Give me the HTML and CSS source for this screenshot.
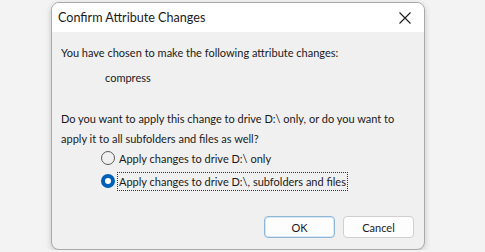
FILE: index.html
```html
<!DOCTYPE html>
<html>
<head>
<link rel="stylesheet" href="styles.css">
</head>
<body>
  <div class="dialog">
    <div class="title-bar">
      <span class="title">Confirm Attribute Changes</span>
      <svg class="close" width="14" height="14" viewBox="0 0 14 14">
        <path d="M1.5 1.5 L12.5 12.5 M12.5 1.5 L1.5 12.5" stroke="#1a1a1a" stroke-width="1.1" fill="none"/>
      </svg>
    </div>
    <div class="content">
      <p class="line first">You have chosen to make the following attribute changes:</p>
      <p class="line attr">compress</p>
      <p class="line question">Do you want to apply this change to drive D:\ only, or do you want to<br>apply it to all subfolders and files as well?</p>
      <div class="options">
        <label class="option">
          <span class="radio"></span>
          <span class="option-text">Apply changes to drive D:\ only</span>
        </label>
        <label class="option">
          <span class="radio checked"></span>
          <span class="option-text focused">Apply changes to drive D:\, subfolders and files</span>
        </label>
      </div>
      <div class="buttons">
        <button class="btn default">OK</button>
        <button class="btn">Cancel</button>
      </div>
    </div>
  </div>
</body>
</html>
```

FILE: styles.css
```css
body {
  background-color: #f3f3f3;
  font-family: Lato, "Liberation Sans", sans-serif;
  margin: 0;
  padding: 2px 0 0 51px;
}
.dialog {
  background-color: #f0f0f0;
  border: 1px solid #a9a9a9;
  border-radius: 8px;
  box-shadow: 0 2px 6px rgba(0, 0, 0, 0.18);
  display: flex;
  flex-flow: column;
  height: 246px;
  overflow: hidden;
  width: 372px;
}
.title-bar {
  align-items: center;
  background-color: #ffffff;
  display: flex;
  height: 29px;
  justify-content: space-between;
  padding: 0 12px 0 6px;
}
.title {
  color: #1a1a1a;
  font-size: 12.6px;
}
.close {
  margin-top: 1px;
}
.content {
  color: #1a1a1a;
  display: flex;
  flex-flow: column;
  font-size: 11px;
  padding: 11px 0 0 9px;
  white-space: nowrap;
}
.line {
  line-height: 20px;
  margin: 0;
}
.attr {
  margin: 5px 0 0 44px;
}
.question {
  margin-top: 21px;
}
.options {
  display: flex;
  flex-flow: column;
  gap: 3px;
  margin: -1px 0 0 40px;
}
.option {
  align-items: center;
  display: flex;
  height: 20px;
}
.radio {
  border: 1px solid #5a5a5a;
  border-radius: 50%;
  box-sizing: border-box;
  height: 14px;
  margin-right: 2px;
  width: 14px;
}
.radio.checked {
  background-color: #ffffff;
  border: 4px solid #005fb8;
}
.option-text {
  border: 1px dotted transparent;
  line-height: 17px;
  padding: 0 1px;
}
.option-text.focused {
  border-color: #333333;
}
.buttons {
  display: flex;
  gap: 8px;
  justify-content: flex-end;
  margin: 25px 10px 0 0;
}
.btn {
  background-color: #fdfdfd;
  border: 1px solid #d0d0d0;
  border-radius: 4px;
  color: #1a1a1a;
  font-family: Lato, "Liberation Sans", sans-serif;
  font-size: 11px;
  height: 22px;
  padding: 0;
  width: 71px;
}
.btn.default {
  border: 1px solid #8fb7d6;
  box-shadow: inset 0 0 0 1px #d6e6f3;
}
```
